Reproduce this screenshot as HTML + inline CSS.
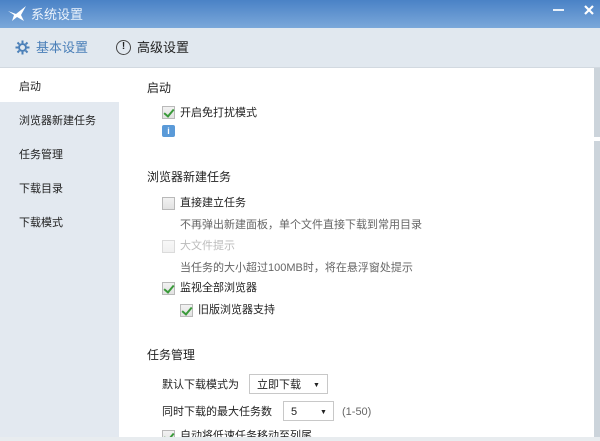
<!DOCTYPE html><html><head><meta charset="utf-8"><style>
*{margin:0;padding:0;box-sizing:border-box}
html,body{width:600px;height:441px;overflow:hidden}
body{font-family:"Liberation Sans","Noto Sans CJK SC",sans-serif;font-size:11px;color:#222;background:#fff}
#w{position:relative;width:600px;height:441px;overflow:hidden}
.t{position:absolute;white-space:nowrap;line-height:14px}
.title{position:absolute;left:0;top:0;width:600px;height:28px;background:linear-gradient(#4a82c6,#7ba8da)}
.tabs{position:absolute;left:0;top:28px;width:600px;height:40px;background:#e1e8ef;border-bottom:1px solid #d2d9e0}
.side{position:absolute;left:0;top:68px;width:119px;height:373px;background:#e3e9f0}
.sel{position:absolute;left:0;top:68px;width:119px;height:34px;background:#fff}
.cb{position:absolute;width:13px;height:13px;border:1px solid #b9b9b9;background:linear-gradient(#f2f2f2,#e2e2e2)}
.cb.on::after{content:"";position:absolute;left:3px;top:0px;width:4px;height:8px;border:solid #3a9a3a;border-width:0 2px 2px 0;transform:rotate(40deg)}
.g{color:#666}
.h{font-size:12px}
.sel2{position:absolute;height:20px;border:1px solid #c8c8c8;background:#fff}
</style></head><body><div id="w">
<div class="title"></div>
<svg class="t" style="left:6px;top:5px" width="24" height="18"><path d="M2 6 L10 9 L20 1 L15 10 L18 16 L11 12 L6 16 L8 10 Z" fill="#fff"/></svg>
<div class="t" style="left:31px;top:8px;color:#eaf2fb;font-size:13px">系统设置</div>
<div class="t" style="left:553px;top:9px;width:11px;height:2px;background:#e8f0fa"></div>
<svg class="t" style="left:583px;top:4px" width="12" height="12"><path d="M2 2L10 10M10 2L2 10" stroke="#fff" stroke-width="2.2"/></svg>
<div class="tabs"></div>
<svg class="t" style="left:15px;top:40px" width="15" height="15" viewBox="0 0 15 15"><circle cx="7.5" cy="7.5" r="3.5" fill="none" stroke="#4a7fb8" stroke-width="2"/><path d="M7.5 0.5V3M7.5 12V14.5M0.5 7.5H3M12 7.5H14.5M2.5 2.5L4.3 4.3M10.7 10.7L12.5 12.5M2.5 12.5L4.3 10.7M10.7 4.3L12.5 2.5" stroke="#4a7fb8" stroke-width="2"/></svg>
<div class="t" style="left:36px;top:41px;color:#4a7fb8;font-size:13px">基本设置</div>
<div class="t" style="left:116px;top:40px;width:15px;height:15px;border:1.5px solid #444;border-radius:50%;text-align:center;font-size:10px;line-height:12px;font-weight:bold">!</div>
<div class="t" style="left:137px;top:41px;font-size:13px">高级设置</div>
<div class="side"></div><div class="sel"></div>
<div class="t" style="left:19px;top:80px">启动</div>
<div class="t" style="left:19px;top:114px">浏览器新建任务</div>
<div class="t" style="left:19px;top:148px">任务管理</div>
<div class="t" style="left:19px;top:182px">下载目录</div>
<div class="t" style="left:19px;top:216px">下载模式</div>
<div class="t" style="left:594px;top:68px;width:6px;height:69px;background:#ccd4db"></div>
<div class="t" style="left:594px;top:141px;width:6px;height:300px;background:#ccd4db"></div>
<div class="t h" style="left:147px;top:81px">启动</div>
<div class="cb on" style="left:162px;top:106px"></div><div class="t" style="left:180px;top:106px">开启免打扰模式</div>
<div class="t" style="left:162px;top:125px;width:13px;height:12px;background:#5a9ad8;border-radius:2px;color:#fff;font-size:9px;text-align:center;line-height:12px;font-weight:bold">i</div>
<div class="t h" style="left:147px;top:170px">浏览器新建任务</div>
<div class="cb" style="left:162px;top:197px"></div><div class="t" style="left:180px;top:196px">直接建立任务</div>
<div class="t g" style="left:180px;top:218px">不再弹出新建面板，单个文件直接下载到常用目录</div>
<div class="cb" style="left:162px;top:240px;opacity:.5"></div><div class="t" style="left:180px;top:239px;color:#bbb">大文件提示</div>
<div class="t g" style="left:180px;top:261px">当任务的大小超过100MB时，将在悬浮窗处提示</div>
<div class="cb on" style="left:162px;top:282px"></div><div class="t" style="left:180px;top:281px">监视全部浏览器</div>
<div class="cb on" style="left:180px;top:304px"></div><div class="t" style="left:198px;top:303px">旧版浏览器支持</div>
<div class="t h" style="left:147px;top:348px">任务管理</div>
<div class="t" style="left:162px;top:378px">默认下载模式为</div>
<div class="sel2" style="left:249px;top:374px;width:79px"></div><div class="t" style="left:257px;top:378px">立即下载</div><div class="t" style="left:313px;top:379px;font-size:7px">▼</div>
<div class="t" style="left:162px;top:405px">同时下载的最大任务数</div>
<div class="sel2" style="left:283px;top:401px;width:51px"></div><div class="t" style="left:291px;top:405px">5</div><div class="t" style="left:320px;top:406px;font-size:7px">▼</div>
<div class="t g" style="left:342px;top:405px">(1-50)</div>
<div class="cb on" style="left:162px;top:430px"></div><div class="t" style="left:180px;top:429px;height:8px;overflow:hidden">自动将低速任务移动至列尾</div>
<div class="t" style="left:0;top:437px;width:600px;height:4px;background:#e8ecef"></div>
</div></body></html>
